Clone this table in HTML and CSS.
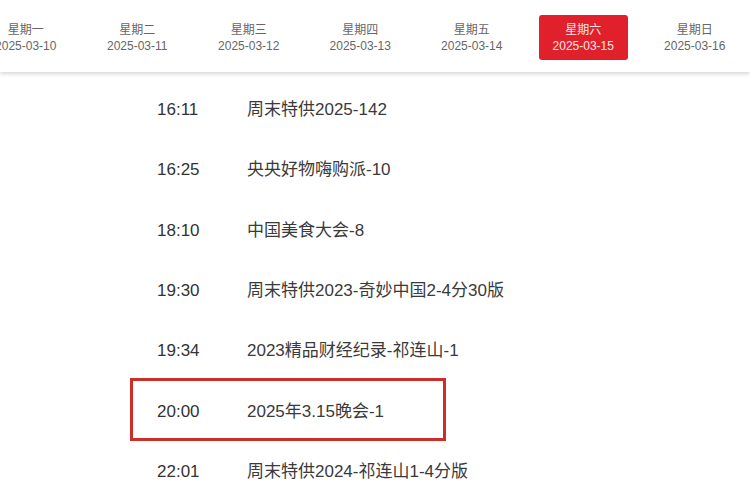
FILE: index.html
```html
<!DOCTYPE html>
<html lang="zh-CN">
<head>
<meta charset="utf-8">
<title>节目单</title>
<link rel="stylesheet" href="styles.css">
</head>
<body>
<header class="week-bar">
  <div class="week-track">
    <div class="day"><div class="day-box"><span class="day-name">星期一</span><span class="day-date">2025-03-10</span></div></div>
    <div class="day"><div class="day-box"><span class="day-name">星期二</span><span class="day-date">2025-03-11</span></div></div>
    <div class="day"><div class="day-box"><span class="day-name">星期三</span><span class="day-date">2025-03-12</span></div></div>
    <div class="day"><div class="day-box"><span class="day-name">星期四</span><span class="day-date">2025-03-13</span></div></div>
    <div class="day"><div class="day-box"><span class="day-name">星期五</span><span class="day-date">2025-03-14</span></div></div>
    <div class="day"><div class="day-box active"><span class="day-name">星期六</span><span class="day-date">2025-03-15</span></div></div>
    <div class="day"><div class="day-box"><span class="day-name">星期日</span><span class="day-date">2025-03-16</span></div></div>
  </div>
</header>
<main class="schedule">
  <div class="row"><span class="time">16:11</span><span class="title">周末特供2025-142</span></div>
  <div class="row"><span class="time">16:25</span><span class="title">央央好物嗨购派-10</span></div>
  <div class="row"><span class="time">18:10</span><span class="title">中国美食大会-8</span></div>
  <div class="row"><span class="time">19:30</span><span class="title">周末特供2023-奇妙中国2-4分30版</span></div>
  <div class="row"><span class="time">19:34</span><span class="title">2023精品财经纪录-祁连山-1</span></div>
  <div class="row highlight"><span class="time">20:00</span><span class="title">2025年3.15晚会-1</span></div>
  <div class="row"><span class="time">22:01</span><span class="title">周末特供2024-祁连山1-4分版</span></div>
</main>
</body>
</html>
```

FILE: styles.css
```css
* { box-sizing: border-box; }
html, body {
  margin: 0;
  padding: 0;
  background: #ffffff;
  width: 750px;
  height: 500px;
  overflow: hidden;
  font-family: "Liberation Sans", "Noto Sans CJK SC", sans-serif;
}
.week-bar {
  height: 72px;
  background: #ffffff;
  box-shadow: 0 2px 4px rgba(0, 0, 0, 0.16);
  position: relative;
  z-index: 1;
  overflow: hidden;
}
.week-track {
  display: flex;
  height: 72px;
  margin-left: -30px;
}
.day {
  flex: 0 0 111.5px;
  display: flex;
  align-items: center;
  justify-content: center;
}
.day-box {
  width: 89px;
  height: 45px;
  display: flex;
  flex-direction: column;
  align-items: center;
  justify-content: center;
  border-radius: 3px;
  color: #666666;
  font-size: 12px;
  line-height: 16px;
  margin-top: 3px;
}
.day-box.active {
  background: #e0202a;
  color: #fde8e8;
}
.day-name, .day-date { display: block; white-space: nowrap; }
.schedule {
  padding-top: 7px;
  padding-left: 133px;
}
.row {
  width: 310px;
  height: 60.33px;
  display: flex;
  align-items: baseline;
  padding-left: 24px;
  padding-top: 21px;
  font-size: 17px;
  line-height: 20px;
  color: #3a3a3a;
  position: relative;
}
.time {
  flex: 0 0 90px;
  color: #333333;
}
.title { white-space: nowrap; }
.row.highlight::after {
  content: "";
  position: absolute;
  left: -3px;
  right: -3px;
  top: -3px;
  bottom: 0;
  border: 3px solid #cc2f2a;
}
```
